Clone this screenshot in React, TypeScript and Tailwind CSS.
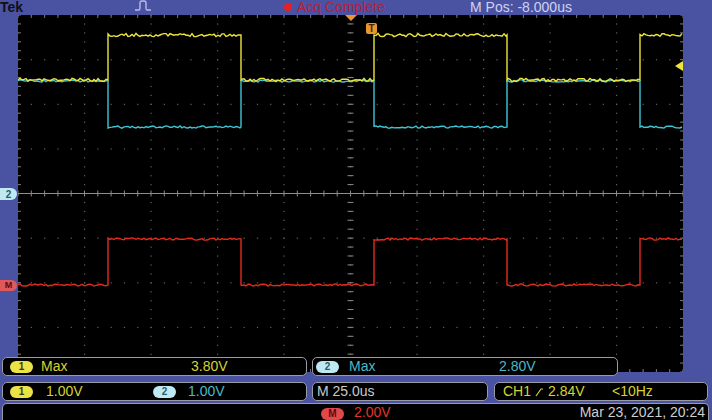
import React from "react";

const W = 665;
const H = 357;
const DX = W / 10;
const DY = H / 8;
const EDGES = [90, 223, 356, 489, 622];

function makeRng(seed: number) {
  let s = seed;
  return () => {
    s = (s * 16807) % 2147483647;
    return s / 2147483647;
  };
}

// square wave with a bit of noise on the flat parts
function squarePath(low: number, high: number, seed: number, noise: number) {
  const rnd = makeRng(seed);
  let level = low;
  let d = `M0,${level.toFixed(1)}`;
  let e = 0;
  for (let x = 2; x <= W; x += 2) {
    if (e < EDGES.length && x >= EDGES[e]) {
      d += ` L${EDGES[e]},${level.toFixed(1)}`;
      level = level === low ? high : low;
      d += ` L${EDGES[e]},${level.toFixed(1)}`;
      e++;
    }
    const y = level + (rnd() - 0.5) * noise;
    d += ` L${x},${y.toFixed(1)}`;
  }
  return d;
}

function Graticule() {
  const dots: React.ReactNode[] = [];
  for (let i = 0; i <= 10; i++) {
    for (let j = 0; j <= 40; j++) {
      dots.push(<rect key={`v${i}-${j}`} x={i * DX - 0.5} y={(j * DY) / 5 - 0.5} width={1.2} height={1.2} fill="#626262" />);
    }
  }
  for (let k = 0; k <= 8; k++) {
    for (let j = 0; j <= 50; j++) {
      dots.push(<rect key={`h${k}-${j}`} x={(j * DX) / 5 - 0.5} y={k * DY - 0.5} width={1.2} height={1.2} fill="#626262" />);
    }
  }
  const ticks: React.ReactNode[] = [];
  for (let j = 0; j <= 50; j++) {
    const x = (j * DX) / 5;
    ticks.push(<line key={`tt${j}`} x1={x} y1={0} x2={x} y2={3} stroke="#777" strokeWidth={1} />);
    ticks.push(<line key={`tb${j}`} x1={x} y1={H - 3} x2={x} y2={H} stroke="#777" strokeWidth={1} />);
    ticks.push(<line key={`tc${j}`} x1={x} y1={H / 2 - 3} x2={x} y2={H / 2 + 3} stroke="#888" strokeWidth={1} />);
  }
  for (let j = 0; j <= 40; j++) {
    const y = (j * DY) / 5;
    ticks.push(<line key={`tl${j}`} x1={0} y1={y} x2={3} y2={y} stroke="#777" strokeWidth={1} />);
    ticks.push(<line key={`tr${j}`} x1={W - 3} y1={y} x2={W} y2={y} stroke="#777" strokeWidth={1} />);
    ticks.push(<line key={`tm${j}`} x1={W / 2 - 3} y1={y} x2={W / 2 + 3} y2={y} stroke="#888" strokeWidth={1} />);
  }
  return (
    <g>
      {dots}
      {ticks}
      <line x1={0} y1={H / 2} x2={W} y2={H / 2} stroke="#8c8c8c" strokeWidth={1.2} />
    </g>
  );
}

function Badge({ label, tone }: { label: string; tone: "yellow" | "cyan" | "red" }) {
  const cls =
    tone === "yellow"
      ? "bg-[#ece446] text-[#3a3a10]"
      : tone === "cyan"
        ? "bg-[#bfe9f2] text-[#2c5a66]"
        : "bg-[#e0484a] text-[#5a0c10]";
  return (
    <span className={`inline-flex h-[12px] w-[23px] items-center justify-center rounded-full text-[10px] font-bold leading-none ${cls}`}>
      {label}
    </span>
  );
}

export default function App() {
  const yellow = squarePath(65, 20, 11, 3.2);
  const cyan = squarePath(66, 112, 23, 2.2);
  const red = squarePath(270, 224, 37, 2.2);

  return (
    <div className="flex h-[420px] w-[712px] flex-col overflow-hidden bg-[#4a52a2] font-['Liberation_Sans',Arial,sans-serif]">
      {/* status bar */}
      <div className="flex h-[15px] items-start text-[14px] leading-[15px]">
        <span className="w-[135px] font-bold text-[#101018]">Tek</span>
        <svg width="16" height="12" viewBox="0 0 16 12">
          <path d="M0,10 H4 Q5,10 5,8 V3 Q5,1 7,1 H9 Q11,1 11,3 V8 Q11,10 12,10 H16" fill="none" stroke="#b9bdea" strokeWidth={1.4} />
        </svg>
        <span className="ml-[133px] mt-[3px] h-[8px] w-[8px] rounded-full bg-[#e82020]" />
        <span className="ml-[5px] w-[173px] text-[#b8203c]">Acq Complete</span>
        <span className="text-[#cfd2f2]">M Pos: -8.000us</span>
      </div>

      {/* plot */}
      <div className="flex h-[357px]">
        <div className="relative w-[18px]">
          <span className="absolute left-0 top-[173px] flex h-[12px] w-[17px] items-center justify-center rounded-r-full rounded-l-[3px] bg-[#bfe9f2] text-[10px] font-bold text-[#2c5a66]">
            2
          </span>
          <span className="absolute left-0 top-[265px] flex h-[11px] w-[17px] items-center justify-center rounded-r-full rounded-l-[3px] bg-[#e0585a] text-[9px] font-bold text-[#5a0c10]">
            M
          </span>
        </div>
        <div className="w-[665px] bg-black">
          <svg width={W} height={H} viewBox={`0 0 ${W} ${H}`} className="block">
            <Graticule />
            <path d={cyan} fill="none" stroke="#3ec6d6" strokeWidth={1.4} />
            <path d={yellow} fill="none" stroke="#eee43a" strokeWidth={1.4} />
            <path d={red} fill="none" stroke="#e42a1e" strokeWidth={1.4} />
            <polygon points="327,0 339,0 333,6" fill="#e89a30" />
            <rect x={348} y={8} width={11} height={11} rx={2} fill="#e8962e" />
            <text x={353.5} y={17} fontSize={10} fontWeight="bold" textAnchor="middle" fill="#4a2400" fontFamily="Liberation Sans, Arial, sans-serif">
              T
            </text>
            <polygon points="657,51 665,46 665,56" fill="#eee43a" />
          </svg>
        </div>
      </div>

      {/* readouts */}
      <div className="relative -mt-[15px] flex flex-col text-[14px] leading-[17px]">
        <div className="flex h-[19px]">
          <div className="ml-[2px] flex w-[305px] items-center rounded-[5px] border-[1.5px] border-[#9a9aa4] bg-black pl-[7px]">
            <Badge label="1" tone="yellow" />
            <span className="ml-[8px] w-[150px] text-[#d6d232]">Max</span>
            <span className="text-[#d6d232]">3.80V</span>
          </div>
          <div className="ml-[5px] flex w-[306px] items-center rounded-[5px] border-[1.5px] border-[#9a9aa4] bg-black pl-[3px]">
            <Badge label="2" tone="cyan" />
            <span className="ml-[10px] w-[150px] text-[#4ab8c6]">Max</span>
            <span className="text-[#4ab8c6]">2.80V</span>
          </div>
        </div>
        <div className="h-[6px]" />
        <div className="flex h-[19px]">
          <div className="ml-[2px] flex w-[305px] items-center rounded-[5px] border-[1.5px] border-[#9a9aa4] bg-black pl-[7px]">
            <Badge label="1" tone="yellow" />
            <span className="ml-[13px] w-[107px] text-[#d6d232]">1.00V</span>
            <Badge label="2" tone="cyan" />
            <span className="ml-[12px] text-[#4ab8c6]">1.00V</span>
          </div>
          <div className="ml-[5px] flex w-[176px] items-center rounded-[5px] border-[1.5px] border-[#9a9aa4] bg-black pl-[4px] text-[#c9c9cc]">
            M 25.0us
          </div>
          <div className="ml-[6px] flex w-[214px] items-center rounded-[5px] border-[1.5px] border-[#9a9aa4] bg-black pl-[8px] text-[#d6d232]">
            <span>CH1</span>
            <svg width="9" height="10" viewBox="0 0 9 10" className="mx-[4px]">
              <path d="M1,9 L6,2 L8,2" fill="none" stroke="#d6d232" strokeWidth={1.2} />
            </svg>
            <span className="w-[64px]">2.84V</span>
            <span>&lt;10Hz</span>
          </div>
        </div>
        <div className="h-[2px]" />
        <div className="flex h-[17px]">
          <div className="ml-[2px] flex h-[20px] w-[707px] items-center rounded-t-[5px] border-x-[1.5px] border-t-[1.5px] border-[#9a9aa4] bg-black pb-[2px] pr-[3px]">
            <span className="ml-[318px]">
              <Badge label="M" tone="red" />
            </span>
            <span className="ml-[10px] text-[#e43424]">2.00V</span>
            <span className="ml-auto text-[#cfcfd2]">Mar 23, 2021, 20:24</span>
          </div>
        </div>
      </div>
    </div>
  );
}
